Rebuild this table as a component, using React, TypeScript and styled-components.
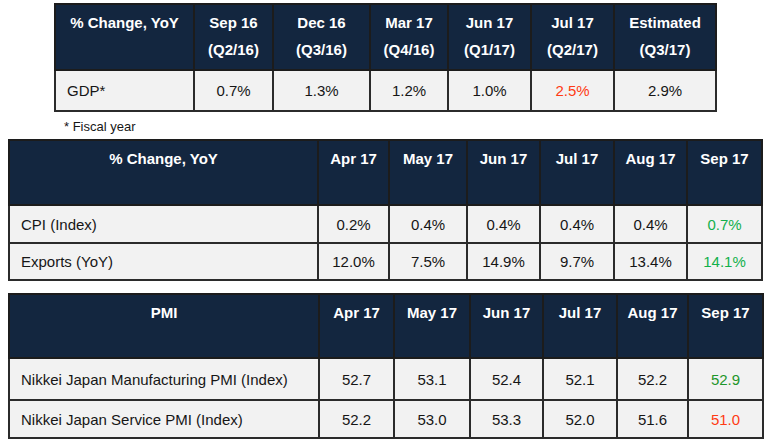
import React from 'react';
import styled, { createGlobalStyle } from 'styled-components';

const Global = createGlobalStyle`
  html, body {
    margin: 0;
    padding: 0;
    background: #ffffff;
    font-family: "Liberation Sans", Arial, sans-serif;
  }
`

const Page = styled.div`
  width: 768px;
  height: 440px;
  padding-top: 3px;
  box-sizing: border-box;
  overflow: hidden;
`

const Table = styled.table<{ $left: number; $width: number; $top?: number }>`
  margin-left: ${p => p.$left}px;
  margin-top: ${p => p.$top ?? 0}px;
  width: ${p => p.$width}px;
  table-layout: fixed;
  border-collapse: collapse;
  border: 2px solid #2b2b2b;
  font-size: 15px;
  color: #161616;
`

const Col = styled.col<{ $w: number }>`
  width: ${p => p.$w}px;
`

const HeadRow = styled.tr<{ $h: number }>`
  height: ${p => p.$h}px;
  background: #13263f;
`

const BodyRow = styled.tr<{ $h: number }>`
  height: ${p => p.$h}px;
  background: #f2f2f2;
`

const Th = styled.th`
  vertical-align: top;
  padding: 4px 2px 0;
  line-height: 27px;
  color: #ffffff;
  font-weight: bold;
  text-align: center;
  border: 2px solid #1c1c1c;
  white-space: nowrap;
`

const Label = styled.td`
  padding: 0 0 0 11px;
  text-align: left;
  vertical-align: middle;
  border: 2px solid #2b2b2b;
  white-space: nowrap;
`

const Cell = styled.td<{ $tone?: 'red' | 'green' | 'dkgreen' }>`
  padding: 0;
  text-align: center;
  vertical-align: middle;
  border: 2px solid #2b2b2b;
  color: ${p =>
    p.$tone === 'red' ? '#ff3b14' : p.$tone === 'green' ? '#12b04c' : p.$tone === 'dkgreen' ? '#1e962a' : '#161616'};
`

const Note = styled.div`
  margin: 7px 0 0 64px;
  font-size: 13px;
  line-height: 15px;
  height: 20px;
  color: #161616;
`

type Tone = 'red' | 'green' | 'dkgreen' | undefined
type Row = { label: string; values: [string, Tone?][]; h: number }

const months = ['Apr 17', 'May 17', 'Jun 17', 'Jul 17', 'Aug 17', 'Sep 17']

const tradeRows: Row[] = [
  { label: 'CPI (Index)', h: 38, values: [['0.2%'], ['0.4%'], ['0.4%'], ['0.4%'], ['0.4%'], ['0.7%', 'green']] },
  { label: 'Exports (YoY)', h: 37, values: [['12.0%'], ['7.5%'], ['14.9%'], ['9.7%'], ['13.4%'], ['14.1%', 'green']] },
]

const pmiRows: Row[] = [
  { label: 'Nikkei Japan Manufacturing PMI (Index)', h: 42, values: [['52.7'], ['53.1'], ['52.4'], ['52.1'], ['52.2'], ['52.9', 'dkgreen']] },
  { label: 'Nikkei Japan Service PMI (Index)', h: 38, values: [['52.2'], ['53.0'], ['53.3'], ['52.0'], ['51.6'], ['51.0', 'red']] },
]

const MonthTable = ({ title, rows, cols, top, head }: { title: string; rows: Row[]; cols: number[]; top: number; head: number }) => (
  <Table $left={8} $width={754} $top={top}>
    <colgroup>
      {cols.map((w, i) => <Col key={i} $w={w} />)}
    </colgroup>
    <thead>
      <HeadRow $h={head}>
        <Th>{title}</Th>
        {months.map(m => <Th key={m}>{m}</Th>)}
      </HeadRow>
    </thead>
    <tbody>
      {rows.map(r => (
        <BodyRow key={r.label} $h={r.h}>
          <Label>{r.label}</Label>
          {r.values.map(([v, tone], i) => <Cell key={i} $tone={tone}>{v}</Cell>)}
        </BodyRow>
      ))}
    </tbody>
  </Table>
)

const App: React.FC = () => {
  const gdpHeads = [
    ['Sep 16', '(Q2/16)'],
    ['Dec 16', '(Q3/16)'],
    ['Mar 17', '(Q4/16)'],
    ['Jun 17', '(Q1/17)'],
    ['Jul 17', '(Q2/17)'],
    ['Estimated', '(Q3/17)'],
  ]
  const gdp: [string, Tone?][] = [['0.7%'], ['1.3%'], ['1.2%'], ['1.0%'], ['2.5%', 'red'], ['2.9%']]

  return (
    <>
      <Global />
      <Page>
        <Table $left={54} $width={661}>
          <colgroup>
            {[139, 79, 97, 78, 83, 83, 102].map((w, i) => <Col key={i} $w={w} />)}
          </colgroup>
          <thead>
            <HeadRow $h={66}>
              <Th>% Change, YoY</Th>
              {gdpHeads.map(([a, b]) => (
                <Th key={a}>{a}<br />{b}</Th>
              ))}
            </HeadRow>
          </thead>
          <tbody>
            <BodyRow $h={41}>
              <Label>GDP*</Label>
              {gdp.map(([v, tone], i) => <Cell key={i} $tone={tone}>{v}</Cell>)}
            </BodyRow>
          </tbody>
        </Table>
        <Note>* Fiscal year</Note>
        <MonthTable title="% Change, YoY" rows={tradeRows} cols={[309, 71, 78, 73, 74, 73, 75]} top={0} head={65} />
        <MonthTable title="PMI" rows={pmiRows} cols={[310, 75, 76, 73, 74, 71, 75]} top={12} head={64} />
      </Page>
    </>
  )
}

export default App
